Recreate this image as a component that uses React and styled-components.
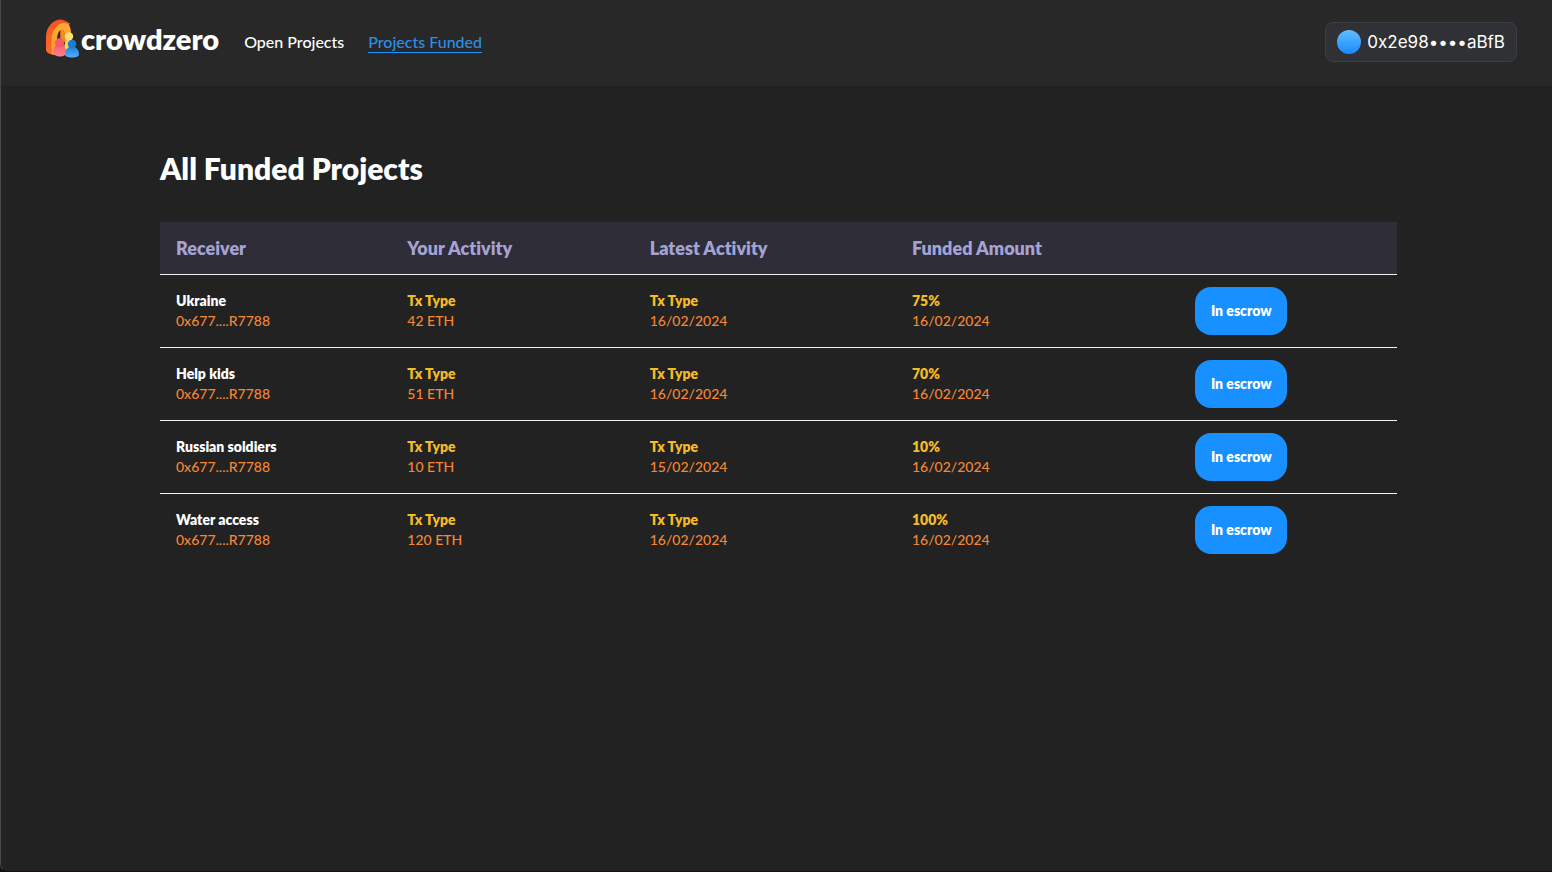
import styled, { createGlobalStyle } from "styled-components";

const GlobalStyle = createGlobalStyle`
  * {
    box-sizing: border-box;
  }

  body {
    margin: 0;
    background-color: #111;
    color: #fff;
    font-family: Lato, "Liberation Sans", sans-serif;
    font-variant-ligatures: none;
  }
`;

const Page = styled.div`
  min-height: 100vh;
  background-color: #222;
  border-left: 1px solid #484848;
  border-bottom: 1px solid #161214;
  border-bottom-left-radius: 8px;
`;

const Header = styled.header`
  display: flex;
  align-items: center;
  justify-content: space-between;
  height: 86px;
  padding: 0 35px 2px 43px;
  background-color: #282828;
`;

const Nav = styled.nav`
  display: flex;
  align-items: center;
  gap: 24px;
`;

const Brand = styled.a`
  display: flex;
  align-items: center;
  padding: 0 1px 6px 0;
  color: #fff;
  text-decoration: none;
`;

const BrandName = styled.span`
  font-size: 29px;
  line-height: 40px;
  font-weight: 800;
`;

const NavLink = styled.a`
  border-bottom: 1px solid ${({ $active }) => ($active ? "#1e90ff" : "transparent")};
  color: ${({ $active }) => ($active ? "#2d8fe6" : "#fff")};
  font-size: 16px;
  line-height: 20px;
  font-weight: 500;
  text-decoration: none;
`;

const WalletButton = styled.button`
  display: flex;
  align-items: center;
  gap: 6px;
  height: 40px;
  padding: 0 11px;
  border: 1px solid #3c3f42;
  border-radius: 8px;
  background-color: #2f3134;
  color: #fff;
  font-family: Inter, sans-serif;
  font-size: 17px;
  font-variant-ligatures: none;
  cursor: pointer;
`;

const Avatar = styled.span`
  width: 24px;
  height: 24px;
  border-radius: 50%;
  background: linear-gradient(#5fc0ff, #1a88ff);
`;

const Main = styled.main`
  padding: 64px 155px 64px 159px;
`;

const Title = styled.h1`
  margin: 0 0 36px;
  font-size: 30px;
  line-height: 36px;
  font-weight: 800;
`;

const Table = styled.table`
  width: 100%;
  table-layout: fixed;
  border-collapse: separate;
  border-spacing: 0;
  text-align: left;

  tbody tr:last-child td {
    border-bottom: none;
  }
`;

const Column = styled.col`
  width: ${({ $width }) => $width};
`;

const HeadCell = styled.th`
  height: 53px;
  padding: 0 16px;
  border-bottom: 1px solid #f0f0f0;
  background-color: #2e2d38;
  color: #a5a3d4;
  font-size: 18px;
  line-height: 24px;
  font-weight: 800;
`;

const Cell = styled.td`
  padding: 12px 16px;
  border-bottom: 1px solid #f0f0f0;
`;

const CellTitle = styled.div`
  color: ${({ $color }) => $color || "#f4bb27"};
  font-size: 14px;
  line-height: 20px;
  font-weight: 800;
`;

const CellText = styled.div`
  color: #f58634;
  font-size: 14px;
  line-height: 20px;
  font-weight: 500;
`;

const EscrowButton = styled.button`
  display: block;
  width: 92px;
  height: 48px;
  padding: 0 0 2px;
  border: none;
  border-radius: 16px;
  background-color: #1890ff;
  color: #fff;
  font-family: inherit;
  font-size: 14px;
  font-weight: 800;
  cursor: pointer;
`;

const columns = [
  { label: "Receiver", width: "18.7%" },
  { label: "Your Activity", width: "19.6%" },
  { label: "Latest Activity", width: "21.2%" },
  { label: "Funded Amount", width: "22.9%" },
  { label: "", width: "17.6%" },
];

const projects = [
  { name: "Ukraine", address: "0x677....R7788", amount: "42 ETH", latest: "16/02/2024", funded: "75%", date: "16/02/2024" },
  { name: "Help kids", address: "0x677....R7788", amount: "51 ETH", latest: "16/02/2024", funded: "70%", date: "16/02/2024" },
  { name: "Russian soldiers", address: "0x677....R7788", amount: "10 ETH", latest: "15/02/2024", funded: "10%", date: "16/02/2024" },
  { name: "Water access", address: "0x677....R7788", amount: "120 ETH", latest: "16/02/2024", funded: "100%", date: "16/02/2024" },
];

const LogoMark = () => (
  <svg width="37" height="40" viewBox="0 0 37 40" fill="none" aria-hidden="true">
    <defs>
      <linearGradient id="arch" x1="0" y1="0" x2="0" y2="1">
        <stop stopColor="#f4551e" />
        <stop offset="1" stopColor="#fb6b2b" />
      </linearGradient>
      <linearGradient id="face" x1="0" y1="0" x2="0" y2="1">
        <stop stopColor="#ffab38" />
        <stop offset="1" stopColor="#fb9a2c" />
      </linearGradient>
      <linearGradient id="pink" x1="0" y1="0" x2="0" y2="1">
        <stop stopColor="#f4606e" />
        <stop offset="1" stopColor="#ff7f8c" />
      </linearGradient>
      <linearGradient id="blue" x1="0" y1="0" x2="0" y2="1">
        <stop stopColor="#1b7fdc" />
        <stop offset="1" stopColor="#55b0fb" />
      </linearGradient>
    </defs>
    <path d="M2 31V17C2 9 9 .5 16 .5c3 0 7 2 10 4L12 36C8 36 2 34 2 31z" fill="url(#arch)" />
    <path d="M7.500 35V20C7.500 12 13 4.500 20 4c5 0 7 4 7 10v12h-6V16c0-3-1-5-3-5-3 0-5 5-5 9v13l-3 3z" fill="url(#face)" />
    <path d="M13 22c0-5 1-9 3.500-11v10l-3.500 3z" fill="#2b2724" />
    <path d="M16.500 11c2-1 4.500 0 4.500 5v7h-4.500z" fill="#f28a1d" />
    <path d="M20 31c0-7 2-10 5-10s5 3 5 10z" fill="#ffd34f" />
    <circle cx="25" cy="17.500" r="4.200" fill="#ffe173" />
    <path d="M9.500 34c0-6 2-9 6.500-9s6 4 6 9c0 2-3 3.500-6 3.500S9.500 36 9.500 34z" fill="url(#pink)" />
    <circle cx="15.500" cy="24" r="4.700" fill="#f25d69" />
    <path d="M21 35.500c0-5 3-8 7-8s7 3 7 8c0 2-3 3-7 3s-7-1-7-3z" fill="url(#blue)" />
    <circle cx="28" cy="25" r="4.300" fill="#1a7dda" />
  </svg>
);

const App = () => {
  return (
    <>
      <GlobalStyle />
      <Page>
        <Header>
          <Nav>
            <Brand href="#home">
              <LogoMark />
              <BrandName>crowdzero</BrandName>
            </Brand>
            <NavLink href="#open">Open Projects</NavLink>
            <NavLink href="#funded" $active>
              Projects Funded
            </NavLink>
          </Nav>
          <WalletButton type="button">
            <Avatar />
            0x2e98••••aBfB
          </WalletButton>
        </Header>
        <Main>
          <Title>All Funded Projects</Title>
          <Table>
            <colgroup>
              {columns.map((column) => (
                <Column key={column.label} $width={column.width} />
              ))}
            </colgroup>
            <thead>
              <tr>
                {columns.map((column) => (
                  <HeadCell key={column.label} scope="col">
                    {column.label}
                  </HeadCell>
                ))}
              </tr>
            </thead>
            <tbody>
              {projects.map((project) => (
                <tr key={project.name}>
                  <Cell>
                    <CellTitle $color="#fff">{project.name}</CellTitle>
                    <CellText>{project.address}</CellText>
                  </Cell>
                  <Cell>
                    <CellTitle>Tx Type</CellTitle>
                    <CellText>{project.amount}</CellText>
                  </Cell>
                  <Cell>
                    <CellTitle>Tx Type</CellTitle>
                    <CellText>{project.latest}</CellText>
                  </Cell>
                  <Cell>
                    <CellTitle>{project.funded}</CellTitle>
                    <CellText>{project.date}</CellText>
                  </Cell>
                  <Cell>
                    <EscrowButton type="button">In escrow</EscrowButton>
                  </Cell>
                </tr>
              ))}
            </tbody>
          </Table>
        </Main>
      </Page>
    </>
  );
};

export default App;
